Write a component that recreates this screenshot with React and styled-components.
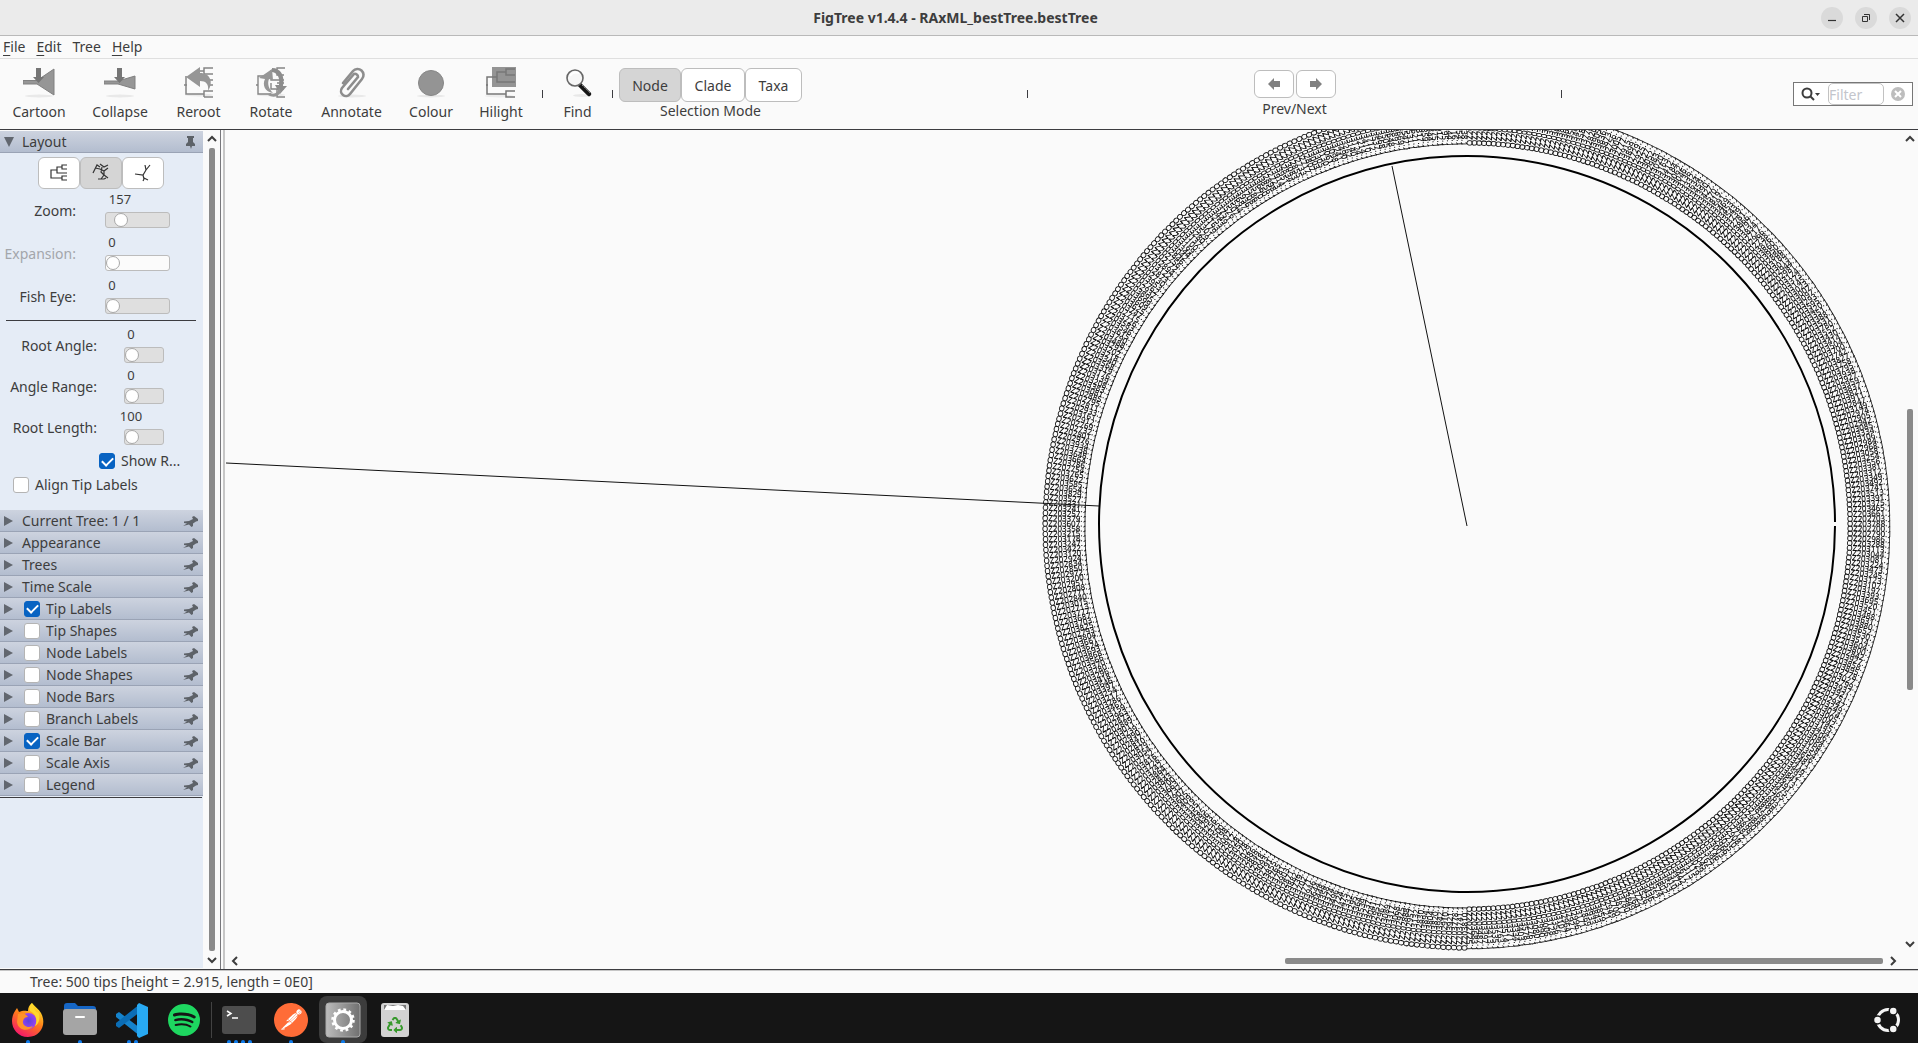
import React, { useState } from "react";
import styled, { createGlobalStyle, css } from "styled-components";
import { SiSpotify, SiPostman } from "react-icons/si";
import { FaRecycle } from "react-icons/fa";

const color = {
  text: "#3d3d3d",
  window: "#fafafa",
  side: "#e5ecf6",
  dark: "#3c3c40",
  accent: "#0863c2",
};

const GlobalStyle = createGlobalStyle`
  * { box-sizing: border-box; }
  body { margin: 0; background: ${color.window}; }
  body, button, input { font-family: "Noto Sans", "Open Sans", sans-serif; font-size: 14px; color: ${color.text}; }
`;

/* ---------- window frame ---------- */

const Window = styled.div`
  display: flex;
  flex-direction: column;
  height: 100vh;
  overflow: hidden;
`;

const TitleBar = styled.header`
  display: grid;
  grid-template-columns: 1fr auto 1fr;
  align-items: center;
  flex: none;
  height: 36px;
  padding-right: 7px;
  background: #ebebeb;
  border-bottom: 1px solid #b9b9b9;
`;

const Title = styled.h1`
  grid-column: 2;
  margin: 0;
  font-size: 14px;
  line-height: 20px;
  font-weight: 700;
`;

const WindowButtons = styled.div`
  display: flex;
  justify-content: flex-end;
  gap: 12px;
`;

const RoundButton = styled.button`
  display: grid;
  place-items: center;
  width: 22px;
  height: 22px;
  padding: 0;
  border: 0;
  border-radius: 50%;
  background: #dadada;
`;

const MenuBar = styled.nav`
  display: flex;
  flex: none;
  gap: 11px;
  height: 23px;
  padding-left: 3px;
  border-bottom: 1px solid #dfdfdf;
`;

const MenuButton = styled.button`
  padding: 0;
  border: 0;
  background: none;
  line-height: 22px;
  &::first-letter {
    text-decoration: ${(p) => (p.$mnemonic ? "underline" : "none")};
    text-underline-offset: 3px;
  }
`;

/* ---------- toolbar ---------- */

const Toolbar = styled.div`
  display: flex;
  align-items: center;
  flex: none;
  height: 71px;
  padding-right: 5px;
  border-bottom: 1px solid ${color.dark};
`;

const ToolButton = styled.button`
  display: flex;
  flex-direction: column;
  align-items: center;
  flex: none;
  width: ${(p) => p.$width}px;
  padding: 0;
  border: 0;
  background: none;
  line-height: 20px;
  gap: 4px;
  svg { display: block; }
`;

const Tick = styled.span`
  flex: none;
  width: 1px;
  height: 8px;
  margin: ${(p) => p.$margin || "0"};
  background: ${color.dark};
`;

const Spring = styled.span`
  flex: 1;
`;

const ToolGroup = styled.div`
  display: flex;
  flex-direction: column;
  align-items: center;
  flex: none;
  gap: ${(p) => p.$gap}px;
  line-height: 18px;
`;

const ButtonRow = styled.div`
  display: flex;
  gap: ${(p) => p.$gap || 0}px;
`;

const Segment = styled.button`
  display: grid;
  place-items: center;
  width: ${(p) => p.$width}px;
  height: ${(p) => p.$height}px;
  padding: 0;
  border: 1px solid #bdbdbd;
  border-radius: 6px;
  background: ${(p) => (p.$active ? "#d5d5d5" : "#ffffff")};
`;

const FilterBox = styled.div`
  display: flex;
  align-items: center;
  flex: none;
  width: 120px;
  height: 24px;
  margin-left: 6px;
  padding: 0 7px;
  gap: 7px;
  border: 1px solid #777777;
  background: #ffffff;
`;

const FilterInput = styled.input`
  width: 56px;
  height: 22px;
  padding: 0;
  border: 1px solid #c2c2c2;
  border-radius: 5px;
  background: #ffffff;
  &::placeholder { color: #c3c5cc; opacity: 1; }
`;

const BareButton = styled.button`
  display: grid;
  place-items: center;
  padding: 0;
  border: 0;
  background: none;
`;

/* ---------- body ---------- */

const Body = styled.main`
  display: flex;
  flex: 1;
  min-height: 0;
`;

const Sidebar = styled.aside`
  flex: none;
  width: 203px;
  margin: 1px 0;
  background: ${color.side};
  overflow: hidden;
`;

const SectionHeader = styled.div`
  display: flex;
  align-items: center;
  height: 22px;
  padding: 0 4px;
  background: linear-gradient(#cdd3df, #b3bdcf);
  border-bottom: 1px solid #9aa3b5;
`;

const SectionLabel = styled.label`
  display: flex;
  align-items: center;
  flex: 1;
  gap: 6px;
  padding-left: ${(p) => (p.$tick ? 10 : 8)}px;
  line-height: 20px;
`;

const SectionEnd = styled.div`
  height: 1px;
  margin: 1px 1px 0 0;
  background: ${color.dark};
`;

const CheckBox = styled.input.attrs({ type: "checkbox" })`
  appearance: none;
  display: grid;
  place-items: center;
  flex: none;
  width: 16px;
  height: 16px;
  margin: 0;
  border: 1px solid #b4b4b4;
  border-radius: 3px;
  background: #ffffff;
  &:checked { background: ${color.accent}; border-color: ${color.accent}; }
  &:checked::after {
    content: "";
    width: 9px;
    height: 5px;
    border: solid #ffffff;
    border-width: 0 0 2px 2px;
    transform: translateY(-1px) rotate(-45deg);
  }
`;

const LayoutPanel = styled.div`
  padding-bottom: 17px;
`;

const LayoutButtons = styled.div`
  display: flex;
  justify-content: center;
  padding: 4px 1px 1px 0;
`;

const SliderGroup = styled.div`
  display: flex;
  flex-direction: column;
  gap: ${(p) => p.$gap}px;
`;

const SliderRow = styled.div`
  display: grid;
  grid-template-columns: ${(p) => p.$columns};
  align-items: end;
  height: 38px;
`;

const SliderLabel = styled.label`
  text-align: right;
  line-height: 34px;
  white-space: nowrap;
  color: ${(p) => (p.$disabled ? "#a3a6ab" : color.text)};
`;

const SliderColumn = styled.div`
  display: flex;
  flex-direction: column;
  gap: 4px;
`;

const SliderValue = styled.output`
  display: flex;
  justify-content: center;
  font-size: 13px;
  line-height: 18px;
`;

const Range = styled.input.attrs({ type: "range" })`
  appearance: none;
  display: block;
  width: 100%;
  height: 16px;
  margin: 0;
  border: 1px solid #bcbcbc;
  border-radius: 3px;
  background: #dfdfdf;
  &:disabled { background: #fbfbfb; }
  &::-webkit-slider-thumb {
    appearance: none;
    width: 14px;
    height: 14px;
    border: 1px solid #a8a8a8;
    border-radius: 50%;
    background: #ffffff;
  }
`;

const Divider = styled.hr`
  height: 1px;
  margin: 6px 7px 4px 6px;
  border: 0;
  background: ${color.dark};
`;

const CheckLine = styled.label`
  display: flex;
  align-items: center;
  gap: 6px;
  height: 16px;
  margin: 8px 0 0 ${(p) => p.$indent}px;
  line-height: 16px;
`;

/* ---------- scroll bars ---------- */

const ScrollTrack = styled.div`
  display: flex;
  align-items: center;
  flex: none;
  ${(p) => (p.$vertical
    ? css`flex-direction: column; width: 16px;`
    : css`height: 16px;`)}
`;

const ScrollGap = styled.span`
  flex: ${(p) => p.$share} 0 0;
`;

const ScrollThumb = styled.span`
  flex: ${(p) => p.$share} 0 0;
  border-radius: 2px;
  background: #8a8a8a;
  ${(p) => (p.$vertical ? css`width: 6px;` : css`height: 6px;`)}
`;

const ScrollButton = styled(BareButton)`
  flex: none;
  width: 18px;
  height: 18px;
`;

const SplitHandle = styled.div`
  flex: none;
  width: 5px;
  border-left: 1px solid #77777b;
  border-right: 2px solid #c6c6c6;
  margin-right: 1px;
`;

const SideScroll = styled.div`
  display: flex;
  justify-content: center;
  flex: none;
  width: 17px;
`;

const Viewer = styled.section`
  display: grid;
  grid-template: minmax(0, 1fr) 16px / minmax(0, 1fr) 16px;
  flex: 1;
  min-width: 0;
`;

const TreeCanvas = styled.svg`
  width: 100%;
  height: 100%;
  overflow: hidden;
  filter: grayscale(1);
  text {
    font-family: "Noto Sans", sans-serif;
    font-size: 8px;
    fill: #000000;
  }
`;

const TipLayer = styled.g`
  stroke: #000000;
  stroke-width: 0.1;
`;

const StatusBar = styled.footer`
  flex: none;
  height: 24px;
  padding-left: 30px;
  border-top: 1px solid ${color.dark};
  box-shadow: inset 0 1px 0 #c6c6c6;
  line-height: 24px;
`;

/* ---------- dock ---------- */

const Dock = styled.nav`
  display: flex;
  align-items: stretch;
  flex: none;
  gap: 4px;
  height: 50px;
  padding: 3px 6px 0 4px;
  background: #151515;
`;

const DockButton = styled.button`
  position: relative;
  display: flex;
  justify-content: center;
  width: 48px;
  padding: 6px 0 0;
  border: 0;
  border-radius: 8px;
  background: ${(p) => (p.$active ? "#3c3c3c" : "transparent")};
  svg { display: block; flex: none; }
`;

const Dots = styled.span`
  position: absolute;
  left: 0;
  right: 0;
  bottom: 0;
  display: flex;
  justify-content: center;
  gap: 3px;
  i { width: 4px; height: 3px; border-radius: 2px 2px 0 0; background: #0f7bea; }
`;

const DockDivider = styled.span`
  width: 1px;
  margin: 6px -1px 5px;
  background: #424242;
`;

/* ---------- icons ---------- */

const Shadow = ({ y = 30 }) => <ellipse cx="16" cy={y} rx="14" ry="1.5" fill="#e9e9e9" />;
const Branches = () => (
  <path d="M30 2H22V9H29M22 5H16V14H29M29 17H22M16 17V23H29M22 23V31H30M16 28H3V10H12M1 19H3" fill="none" stroke="#858585" strokeWidth="1.4" />
);

const toolIcons = {
  Cartoon: (
    <><Shadow /><path d="M0 14.500h14L31 3v26L14 18H0z" fill="#969696" stroke="#808080" /><path d="M13 2h5v9h3l-5.500 6-5.500-6h3z" fill="#757575" /></>
  ),
  Collapse: (
    <><Shadow /><path d="M0 15h14L31 10v13L14 18H0z" fill="#969696" stroke="#808080" /><path d="M13 2h5v9h3l-5.500 6-5.500-6h3z" fill="#757575" /></>
  ),
  Reroot: (
    <><Shadow y={29} /><path d="M30 2H21V8H30M21 5H16M30 14H24M30 19H25M21 31H30M30 25H21V31M21 28H3V10M1 19H4" fill="none" stroke="#858585" strokeWidth="1.500" /><path d="M3 11 17 1v6c10 0 14 9 8 18 1-7-2-10-8-10v6z" fill="#969696" /></>
  ),
  Rotate: (
    <><Shadow y={29} /><Branches /><path d="M4 12 17 3l1 11-4-1c-2 5 0 10 4 14-8-1-11-8-8-14z" fill="#969696" /><path d="M17 2c9 0 13 8 11 18h4l-7 8-5-9h4c1-7-1-12-7-13z" fill="#8c8c8c" /><path d="M15 27c5 2 8-1 9-5l2 4c-3 5-8 6-13 3z" fill="#969696" /></>
  ),
  Annotate: (
    <><Shadow /><path d="m12 22 10-12a3 3 0 0 0-4-3L6 21a5 5 0 0 0 8 6L26 12a6 6 0 0 0-9-8L7 16" transform="translate(0 1)" fill="none" stroke="#8d8d8d" strokeWidth="2.600" strokeLinecap="round" /></>
  ),
  Colour: <><Shadow /><circle cx="16" cy="17" r="12.500" fill="#949494" stroke="#868686" /></>,
  Hilight: (
    <><ellipse cx="14" cy="30" rx="14" ry="1.500" fill="#ececec" /><path d="M7 1h24v20H7z" fill="#949494" /><path d="M30 3H21V9H30M21 6H12V16H30M12 11H2V28H21M30 25H21V31H30M1 19H3" fill="none" stroke="#777" strokeWidth="1.500" /></>
  ),
  Find: (
    <><ellipse cx="20" cy="29.500" rx="9" ry="1.500" fill="#e8e8e8" /><path d="m18 19 9 9" stroke="#151515" strokeWidth="4.500" strokeLinecap="round" /><path d="m20 19 8 8" stroke="#8a8a8a" strokeWidth="1" strokeDasharray="2 1" /><circle cx="13" cy="12" r="8" fill="#f6f6f6" stroke="#666" strokeWidth="1.600" /><path d="M8 10q3-5 9-3" fill="none" stroke="#fff" strokeWidth="2" /></>
  ),
};

const ToolIcon = ({ name }) => <svg width="32" height="32" viewBox="0 0 32 32">{toolIcons[name]}</svg>;

const ArrowIcon = ({ right }) => (
  <svg width="16" height="14" viewBox="0 0 16 14">
    <path d="M2 7 8 1v3h6v6H8v3z" fill="#808080" transform={right ? "rotate(180 8 7)" : undefined} />
  </svg>
);

const Chevron = ({ angle }) => (
  <svg width="12" height="12" viewBox="0 0 12 12">
    <path d="M2 8 6 4l4 4" fill="none" stroke="#3d3d3d" strokeWidth="2" transform={`rotate(${angle} 6 6)`} />
  </svg>
);

const Triangle = ({ open }) => (
  <svg width="10" height="10" viewBox="0 0 10 10">
    <path d={open ? "M0 0H10L5 10z" : "M0 0 9 5 0 10z"} fill="#62676f" />
  </svg>
);

const Pin = ({ upright }) => (
  <svg width="16" height="14" viewBox="0 0 16 14">
    {upright
      ? <path d="M4 1h7v2h-1v4l2 2v2H9l-1 3-1-3H3V9l2-2V3H4z" fill="#5d6268" />
      : <path d="M0 12 4 9.500 1 9V7.500L6 7l4-2-1-2 2-1 4 3v2l-2 .5-3 2v2.500l-1.500 1L6 10.500z" fill="#5d6268" />}
  </svg>
);

const layoutIcons = [
  ["Rectangular", "M17 2h-5v4h5M12 4H7v6h10M17 13h-5v4h5M12 15H1V7h6"],
  ["Polar", "M1 10 5 2l3 2M3 5l5 1M8 1l4 3 4-2M8 6l4 2 4-3M10 4 9 9l3 3M12 8v4l4 3M12 12l-3 4M6 16h6l2-1"],
  ["Radial", "M1 11l8 1 3-5-1-5M12 7l4-5M9 12l1 4-1 2M10 15l4 2"],
];

const firefox = (
  <>
    <defs>
      <linearGradient id="ffBody" x1=".8" y1=".1" x2=".3" y2="1"><stop offset="0" stopColor="#ffe226" /><stop offset=".45" stopColor="#ff7a1a" /><stop offset="1" stopColor="#f5156c" /></linearGradient>
      <radialGradient id="ffGlobe"><stop offset="0" stopColor="#5b3fe0" /><stop offset="1" stopColor="#9a46f0" /></radialGradient>
    </defs>
    <path d="M22 1c2 3 7 6 9 10 6 11 0 24-13 24C8 35 2 27 2 19c0-5 2-9 5-13l2 4c4-2 8-1 9-1 0-3 1-6 4-8z" fill="url(#ffBody)" />
    <circle cx="18.500" cy="19" r="8" fill="url(#ffGlobe)" />
    <path d="M8 12c4-2 8 0 10 3-3 0-4 1-5 4-1 4 4 8 10 5-4 6-15 5-16-4z" fill="#ff9228" />
    <path d="M20 9c6 3 8 9 5 15 4-2 6-9 3-14-1 2-5-4-6-9-2 2-3 5-2 8z" fill="#ffd82e" />
  </>
);

const files = (
  <>
    <path d="M2 8V4q0-3 3-3h8l3 3h15q3 0 3 3v8H2z" fill="#1666c5" />
    <rect x="1" y="7" width="34" height="26" rx="3" fill="#a5a5a5" />
    <rect x="13" y="14" width="10" height="2" rx="1" fill="#fff" />
  </>
);

const vscode = (
  <>
    <path d="M2 12 5 10l21 16v8L2 15z" fill="#1583cc" />
    <path d="M2 24 5 26 26 10V2L2 21z" fill="#0b6db5" />
    <path d="m25 1 9 4v27l-9 4-2-2V3z" fill="#28a9f2" />
  </>
);

const terminal = (
  <>
    <rect x="1" y="4" width="34" height="28" rx="3" fill="#4d4d4d" />
    <path d="m6 9 4 2.500L6 14M11 16h6" fill="none" stroke="#fff" strokeWidth="1.500" />
  </>
);

const gear = (
  <>
    <defs><linearGradient id="gearBg"><stop offset="0" stopColor="#bdbdbd" /><stop offset="1" stopColor="#707070" /></linearGradient></defs>
    <rect x="1" y="1" width="34" height="34" rx="3" fill="url(#gearBg)" stroke="#aaa" />
    <circle cx="18" cy="18" r="10.500" fill="none" stroke="#fff" strokeWidth="2.500" strokeDasharray="2.750 2.750" />
    <circle cx="18" cy="18" r="8.500" fill="none" stroke="#fff" strokeWidth="3" />
  </>
);

const trash = (
  <>
    <rect x="4" y="1" width="28" height="34" rx="3" fill="#d2d2d2" />
    <path d="M7 3h22v5H7z" fill="#777" />
    <path d="m7 8 3-5 6 1 5-1 5 1 3 4z" fill="#fff" />
    <FaRecycle x="10" y="15" width="16" height="16" size={16} color="#379a2c" />
  </>
);

const postman = (
  <>
    <circle cx="18" cy="18" r="16" fill="#fff" />
    <SiPostman x="1" y="1" size={34} color="#ff6c37" />
  </>
);

const spotify = <SiSpotify x="2" y="2" size={32} color="#1ed760" />;

const ubuntu = (
  <svg width="28" height="28" viewBox="0 0 28 28">
    <circle cx="14" cy="14" r="10.500" fill="none" stroke="#f4f4f4" strokeWidth="3" />
    {[60, 180, 300].map((a) => {
      const x = 14 + 10.5 * Math.cos((a * Math.PI) / 180);
      const y = 14 + 10.5 * Math.sin((a * Math.PI) / 180);
      return <circle key={a} cx={x} cy={y} r="4" fill="#f4f4f4" stroke="#151515" strokeWidth="1.500" />;
    })}
  </svg>
);

/* ---------- data ---------- */

const tools = [["Cartoon", 78], ["Collapse", 84], ["Reroot", 73], ["Rotate", 72], ["Annotate", 89], ["Colour", 70], ["Hilight", 70]];

const sections = [
  ["Current Tree: 1 / 1"], ["Appearance"], ["Trees"], ["Time Scale"],
  ["Tip Labels", true], ["Tip Shapes", false], ["Node Labels", false], ["Node Shapes", false],
  ["Node Bars", false], ["Branch Labels", false], ["Scale Bar", true], ["Scale Axis", false], ["Legend", false],
];

const apps = [
  ["Firefox", firefox, 1], ["Files", files, 1], ["Visual Studio Code", vscode, 2], ["Spotify", spotify, 0],
  null,
  ["Terminal", terminal, 4], ["Postman", postman, 1], ["FigTree", gear, 1], ["Trash", trash, 0],
];

const TIP_COUNT = 500;
const tips = Array.from({ length: TIP_COUNT }, (_, i) => {
  const number = 202700 + ((i * 37 + ((i * i) % 11) * 53) % 1260);
  return { name: `OZ${number}.1`, angle: (i + 0.5) * (360 / TIP_COUNT) };
});

/* ---------- components ---------- */

function Tree() {
  const cx = 1241;
  const cy = 396;
  return (
    <TreeCanvas role="img" aria-label="Polar tree with 500 tips">
      <g transform={`translate(${cx} ${cy})`}>
        <TipLayer>
          {tips.map(({ name, angle }) => {
            const flipped = angle > 90 && angle < 270;
            return (
              <text
                key={angle}
                x={flipped ? -380 : 380}
                y="3"
                textAnchor={flipped ? "end" : "start"}
                transform={`rotate(${flipped ? angle - 180 : angle})`}
              >
                {name}
              </text>
            );
          })}
        </TipLayer>
        <path d="M368 0A368 368 0 1 1 368-4" fill="none" stroke="#000" strokeWidth="2" />
        <path d="M0 0-75-360M-1241-63-368-20" fill="none" stroke="#111" strokeWidth="1" />
      </g>
    </TreeCanvas>
  );
}

function Slider({ label, value, min = 0, max, columns, disabled }) {
  const [current, setCurrent] = useState(value);
  const id = label.toLowerCase().replace(" ", "-");
  const share = (current - min) / (max - min);
  return (
    <SliderRow $columns={columns}>
      <SliderLabel htmlFor={id} $disabled={disabled}>{label}:</SliderLabel>
      <span />
      <SliderColumn>
        <SliderValue htmlFor={id} style={{ width: `calc(14px + (100% - 14px) * ${share * 2})` }}>{current}</SliderValue>
        <Range id={id} min={min} max={max} value={current} disabled={disabled} onChange={(e) => setCurrent(Number(e.target.value))} />
      </SliderColumn>
    </SliderRow>
  );
}

function Section({ title, checked }) {
  const [on, setOn] = useState(checked);
  const tick = checked !== undefined;
  return (
    <SectionHeader>
      <Triangle />
      <SectionLabel $tick={tick} as={tick ? "label" : "span"}>
        {tick && <CheckBox checked={on} onChange={() => setOn(!on)} />}
        {title}
      </SectionLabel>
      <Pin />
    </SectionHeader>
  );
}

function LayoutSection() {
  const wide = "76px 29px 65px";
  const narrow = "97px 27px 40px";
  return (
    <LayoutPanel>
      <SectionHeader>
        <Triangle open />
        <SectionLabel as="span">Layout</SectionLabel>
        <Pin upright />
      </SectionHeader>
      <LayoutButtons>
        {layoutIcons.map(([name, d]) => (
          <Segment key={name} aria-label={name} $width={42} $height={32} $active={name === "Polar"}>
            <svg width="18" height="20" viewBox="0 0 18 20"><path d={d} fill="none" stroke="#333" strokeWidth="1.200" /></svg>
          </Segment>
        ))}
      </LayoutButtons>
      <SliderGroup $gap={5}>
        <Slider label="Zoom" value={157} max={1000} columns={wide} />
        <Slider label="Expansion" value={0} max={1000} columns={wide} disabled />
        <Slider label="Fish Eye" value={0} max={1000} columns={wide} />
      </SliderGroup>
      <Divider />
      <SliderGroup $gap={3}>
        <Slider label="Root Angle" value={0} max={360} columns={narrow} />
        <Slider label="Angle Range" value={0} max={360} columns={narrow} />
        <Slider label="Root Length" value={100} min={100} max={1000} columns={narrow} />
      </SliderGroup>
      <CheckLine $indent={99}><CheckBox defaultChecked />Show R...</CheckLine>
      <CheckLine $indent={13}><CheckBox />Align Tip Labels</CheckLine>
    </LayoutPanel>
  );
}

export default function App() {
  const [mode, setMode] = useState("Node");
  return (
    <Window>
      <GlobalStyle />
      <TitleBar>
        <Title>FigTree v1.4.4 - RAxML_bestTree.bestTree</Title>
        <WindowButtons>
          <RoundButton aria-label="Minimise"><svg width="10" height="10"><path d="M1 7.500h8" stroke="#333" strokeWidth="1.200" /></svg></RoundButton>
          <RoundButton aria-label="Restore"><svg width="10" height="10"><path d="M1.500 3.500h5v5h-5zM3 1.500h5.500V7" fill="none" stroke="#333" /></svg></RoundButton>
          <RoundButton aria-label="Close"><svg width="10" height="10"><path d="m1 1 8 8M9 1 1 9" stroke="#333" strokeWidth="1.500" /></svg></RoundButton>
        </WindowButtons>
      </TitleBar>
      <MenuBar>
        {["File", "Edit", "Tree", "Help"].map((m) => <MenuButton key={m} $mnemonic={m !== "Tree"}>{m}</MenuButton>)}
      </MenuBar>
      <Toolbar>
        {tools.map(([name, width]) => (
          <ToolButton key={name} $width={width}><ToolIcon name={name} />{name}</ToolButton>
        ))}
        <Tick $margin="0 0 0 6px" />
        <ToolButton $width={69}><ToolIcon name="Find" />Find</ToolButton>
        <Tick $margin="0 6px 0 0" />
        <ToolGroup $gap={0}>
          <ButtonRow>
            {[["Node", 62], ["Clade", 64], ["Taxa", 57]].map(([name, width]) => (
              <Segment key={name} $width={width} $height={34} $active={mode === name} onClick={() => setMode(name)}>{name}</Segment>
            ))}
          </ButtonRow>
          Selection Mode
        </ToolGroup>
        <Spring /><Tick /><Spring />
        <ToolGroup $gap={2}>
          <ButtonRow $gap={2}>
            <Segment aria-label="Previous" $width={40} $height={28}><ArrowIcon /></Segment>
            <Segment aria-label="Next" $width={40} $height={28}><ArrowIcon right /></Segment>
          </ButtonRow>
          Prev/Next
        </ToolGroup>
        <Spring /><Tick /><Spring />
        <FilterBox>
          <BareButton aria-label="Search options">
            <svg width="20" height="16" viewBox="0 0 20 16"><circle cx="6" cy="7" r="4.500" fill="none" stroke="#3d3d3d" strokeWidth="2" /><path d="m9 10 4 4" stroke="#3d3d3d" strokeWidth="2" /><path d="M14 7h5l-2.500 3z" fill="#3d3d3d" /></svg>
          </BareButton>
          <FilterInput placeholder="Filter" aria-label="Filter" />
          <BareButton aria-label="Clear filter">
            <svg width="14" height="14" viewBox="0 0 14 14"><circle cx="7" cy="7" r="7" fill="#bdbdbd" /><path d="m4 4 6 6M10 4l-6 6" stroke="#fff" strokeWidth="2" /></svg>
          </BareButton>
        </FilterBox>
      </Toolbar>
      <Body>
        <Sidebar>
          <LayoutSection />
          {sections.map(([title, checked]) => <Section key={title} title={title} checked={checked} />)}
          <SectionEnd />
        </Sidebar>
        <SideScroll>
          <ScrollTrack $vertical>
            <ScrollButton aria-label="Scroll panel up"><Chevron angle={0} /></ScrollButton>
            <ScrollThumb $vertical $share={1} />
            <ScrollButton aria-label="Scroll panel down"><Chevron angle={180} /></ScrollButton>
          </ScrollTrack>
        </SideScroll>
        <SplitHandle />
        <Viewer>
          <Tree />
          <ScrollTrack $vertical>
            <ScrollButton aria-label="Scroll up"><Chevron angle={0} /></ScrollButton>
            <ScrollGap $share={261} /><ScrollThumb $vertical $share={281} /><ScrollGap $share={245} />
            <ScrollButton aria-label="Scroll down"><Chevron angle={180} /></ScrollButton>
          </ScrollTrack>
          <ScrollTrack>
            <ScrollButton aria-label="Scroll left"><Chevron angle={270} /></ScrollButton>
            <ScrollGap $share={1042} /><ScrollThumb $share={598} /><ScrollGap $share={1} />
            <ScrollButton aria-label="Scroll right"><Chevron angle={90} /></ScrollButton>
          </ScrollTrack>
        </Viewer>
      </Body>
      <StatusBar>Tree: 500 tips [height = 2.915, length = 0E0]</StatusBar>
      <Dock>
        {apps.map((app) => (app ? (
          <DockButton key={app[0]} aria-label={app[0]} $active={app[0] === "FigTree"}>
            <svg width="36" height="36" viewBox="0 0 36 36">{app[1]}</svg>
            <Dots>{Array.from({ length: app[2] }, (_, i) => <i key={i} />)}</Dots>
          </DockButton>
        ) : <DockDivider key="divider" />))}
        <Spring />
        <DockButton aria-label="Show applications"><svg width="36" height="36" viewBox="-4 -4 36 36">{ubuntu}</svg></DockButton>
      </Dock>
    </Window>
  );
}
